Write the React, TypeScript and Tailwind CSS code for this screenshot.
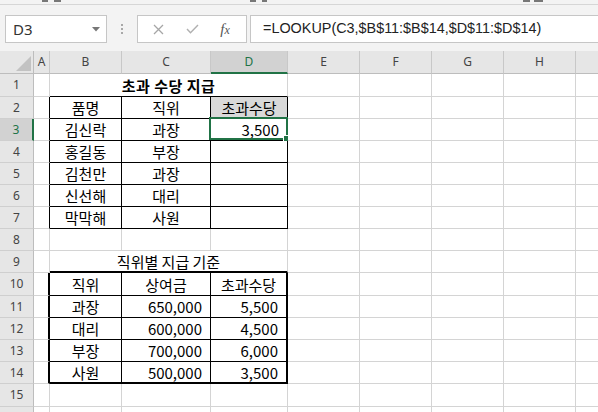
import React from 'react';

const COLS = ['A', 'B', 'C', 'D', 'E', 'F', 'G', 'H', ''];

// row heights after the header row, rows 1..16
const ROW_H: Record<number, string> = {
  1: 'h-[23px]',
  10: 'h-[23px]',
  15: 'h-[23px]',
};

const RIGHT = {
  g: 'border-r border-r-[#d4d4d4]',
  t: 'border-r border-r-black',
  k: 'border-r-2 border-r-black',
};
const BOTTOM = {
  g: 'border-b border-b-[#d4d4d4]',
  t: 'border-b border-b-black',
  k: 'border-b-2 border-b-black',
};

type Val = { text: string; align?: 'c' | 'r'; bold?: boolean; fill?: boolean };

const DATA: Record<number, Val[]> = {
  2: [{ text: '품명' }, { text: '직위' }, { text: '초과수당', fill: true }],
  3: [{ text: '김신락' }, { text: '과장' }, { text: '3,500', align: 'r' }],
  4: [{ text: '홍길동' }, { text: '부장' }, { text: '' }],
  5: [{ text: '김천만' }, { text: '과장' }, { text: '' }],
  6: [{ text: '신선해' }, { text: '대리' }, { text: '' }],
  7: [{ text: '막막해' }, { text: '사원' }, { text: '' }],
  10: [{ text: '직위' }, { text: '상여금' }, { text: '초과수당' }],
  11: [{ text: '과장' }, { text: '650,000', align: 'r' }, { text: '5,500', align: 'r' }],
  12: [{ text: '대리' }, { text: '600,000', align: 'r' }, { text: '4,500', align: 'r' }],
  13: [{ text: '부장' }, { text: '700,000', align: 'r' }, { text: '6,000', align: 'r' }],
  14: [{ text: '사원' }, { text: '500,000', align: 'r' }, { text: '3,500', align: 'r' }],
};

const MERGED: Record<number, Val> = {
  1: { text: '초과 수당 지급', bold: true },
  9: { text: '직위별 지급 기준' },
};

const inT1 = (r: number) => r >= 2 && r <= 7;
const inT2 = (r: number) => r >= 10 && r <= 14;

function rightKind(r: number, c: number): 'g' | 't' | 'k' {
  if (c === 0) return inT1(r) ? 't' : inT2(r) ? 'k' : 'g';
  if (c === 1 || c === 2) return inT1(r) || inT2(r) ? 't' : 'g';
  if (c === 3) return inT1(r) ? 't' : inT2(r) ? 'k' : 'g';
  return 'g';
}

function bottomKind(r: number, c: number): 'g' | 't' | 'k' {
  if (c < 1 || c > 3) return 'g';
  if (r === 1 || inT1(r)) return 't';
  if (r === 9 || r === 14) return 'k';
  if (r >= 10 && r <= 13) return 't';
  return 'g';
}

function CellText({ v }: { v: Val }) {
  return (
    <span
      className={`${v.bold ? 'font-bold tracking-[0.5px]' : 'font-normal'} text-[15px] leading-none text-black`}
    >
      {v.text}
    </span>
  );
}

function Selection() {
  return (
    <div className="absolute -left-[2px] -top-[2px] -right-[1px] bottom-0 border-2 border-[#217346] pointer-events-none">
      <div className="absolute -right-[4px] -bottom-[4px] w-[7px] h-[7px] bg-[#217346] border border-white" />
    </div>
  );
}

function SheetRow({ r }: { r: number }) {
  const h = ROW_H[r] ?? 'h-[22px]';
  const selected = r === 3;
  const cells: React.ReactNode[] = [];

  cells.push(
    <div
      key="hdr"
      className={`${h} flex items-center justify-center border-b border-b-[#cfcfcf] text-[12px] ${
        selected
          ? 'bg-[#d2d2d2] border-r-2 border-r-[#217346] text-[#217346]'
          : 'bg-[#e6e6e6] border-r border-r-[#bdbdbd] text-[#444]'
      }`}
      style={{ fontFamily: '"Noto Sans", "Open Sans", sans-serif' }}
    >
      {r <= 15 ? r : ''}
    </div>
  );

  for (let c = 0; c < COLS.length; c++) {
    if (MERGED[r] && c === 1) {
      cells.push(
        <div
          key={c}
          className={`${h} col-span-3 flex items-center justify-center ${RIGHT.g} ${BOTTOM[bottomKind(r, c)]}`}
        >
          <CellText v={MERGED[r]} />
        </div>
      );
      c = 3;
      continue;
    }
    const v = DATA[r] && c >= 1 && c <= 3 ? DATA[r][c - 1] : undefined;
    cells.push(
      <div
        key={c}
        className={`${h} relative flex items-center ${
          v?.align === 'r' ? 'justify-end pr-[8px]' : 'justify-center'
        } ${v?.fill ? 'bg-[#d9d9d9]' : 'bg-white'} ${RIGHT[rightKind(r, c)]} ${BOTTOM[bottomKind(r, c)]}`}
      >
        {v && <CellText v={v} />}
        {r === 3 && c === 3 && <Selection />}
      </div>
    );
  }
  return <>{cells}</>;
}

export default function App() {
  return (
    <div
      className="w-[598px] h-[412px] overflow-hidden bg-white"
      style={{ fontFamily: '"Noto Sans CJK KR", "Noto Sans", sans-serif' }}
    >
      {/* ribbon bottom edge */}
      <div className="relative h-[5px] bg-[#f3f3f3] border-b border-b-[#d6d6d6]">
        <div className="absolute left-[42px] top-0 w-[6px] h-[2px] bg-[#777]" />
        <div className="absolute left-[54px] top-0 w-[7px] h-[2px] bg-[#777]" />
        <div className="absolute left-[250px] top-0 w-[6px] h-[2px] bg-[#777]" />
        <div className="absolute left-[262px] top-0 w-[5px] h-[2px] bg-[#777]" />
        <div className="absolute left-[523px] top-0 w-[7px] h-[2px] bg-[#777]" />
        <div className="absolute left-[534px] top-0 w-[9px] h-[2px] bg-[#777]" />
      </div>

      {/* formula bar */}
      <div className="h-[46px] bg-[#f3f3f3] flex items-start pt-[10px]">
        <div className="ml-[5px] w-[102px] h-[28px] bg-white border border-[#c6c6c6] flex items-center justify-between pl-[7px] pr-[6px]">
          <span className="text-[15px] text-[#333]" style={{ fontFamily: '"Noto Sans", sans-serif' }}>
            D3
          </span>
          <svg width="8" height="5" viewBox="0 0 8 5">
            <path d="M0 0 L8 0 L4 4.5 Z" fill="#777" />
          </svg>
        </div>
        <div className="w-[30px] h-[28px] flex flex-col items-center justify-center gap-[2px]">
          <div className="w-[2px] h-[2px] bg-[#a8a8a8]" />
          <div className="w-[2px] h-[2px] bg-[#a8a8a8]" />
          <div className="w-[2px] h-[2px] bg-[#a8a8a8]" />
        </div>
        <div className="w-[110px] h-[28px] bg-white border border-[#c6c6c6] flex items-center">
          <div className="w-[38px] flex justify-center pl-[2px]">
            <svg width="11" height="11" viewBox="0 0 11 11">
              <path d="M1 1 L10 10 M10 1 L1 10" stroke="#a6a6a6" strokeWidth="1.3" fill="none" />
            </svg>
          </div>
          <div className="w-[32px] flex justify-center">
            <svg width="13" height="10" viewBox="0 0 13 10">
              <path d="M1 5 L4.5 8.8 L12 1" stroke="#b0b0b0" strokeWidth="1.4" fill="none" />
            </svg>
          </div>
          <div className="flex-1 flex justify-center pr-[4px]">
            <span
              className="italic text-[15px] leading-none text-[#555]"
              style={{ fontFamily: '"Liberation Serif", serif' }}
            >
              f<span className="text-[12px]">x</span>
            </span>
          </div>
        </div>
        <div className="ml-[3px] flex-1 h-[28px] bg-white border border-r-0 border-[#c6c6c6] flex items-center pl-[12px]">
          <span className="text-[14.4px] text-[#222]" style={{ fontFamily: '"Liberation Sans", sans-serif' }}>
            =LOOKUP(C3,$B$11:$B$14,$D$11:$D$14)
          </span>
        </div>
      </div>

      {/* sheet */}
      <div className="grid grid-cols-[34px_16px_72px_89px_77px_72px_72px_72px_72px_72px]">
        {/* corner */}
        <div className="h-[23px] bg-[#e6e6e6] border-r border-r-[#bdbdbd] border-b border-b-[#bdbdbd] flex items-end justify-end pr-[2px] pb-[2px]">
          <svg width="15" height="15" viewBox="0 0 15 15">
            <path d="M15 0 L15 15 L0 15 Z" fill="#c2c2c2" />
          </svg>
        </div>
        {COLS.map((c, i) => (
          <div
            key={i}
            className={`h-[23px] flex items-center justify-center text-[12px] border-r border-r-[#c8c8c8] ${
              c === 'D'
                ? 'bg-[#d2d2d2] border-b-2 border-b-[#217346] text-[#217346]'
                : 'bg-[#e6e6e6] border-b border-b-[#bdbdbd] text-[#444]'
            }`}
            style={{ fontFamily: '"Noto Sans", "Open Sans", sans-serif' }}
          >
            {c}
          </div>
        ))}
        {Array.from({ length: 16 }, (_, i) => (
          <SheetRow key={i + 1} r={i + 1} />
        ))}
      </div>
    </div>
  );
}
